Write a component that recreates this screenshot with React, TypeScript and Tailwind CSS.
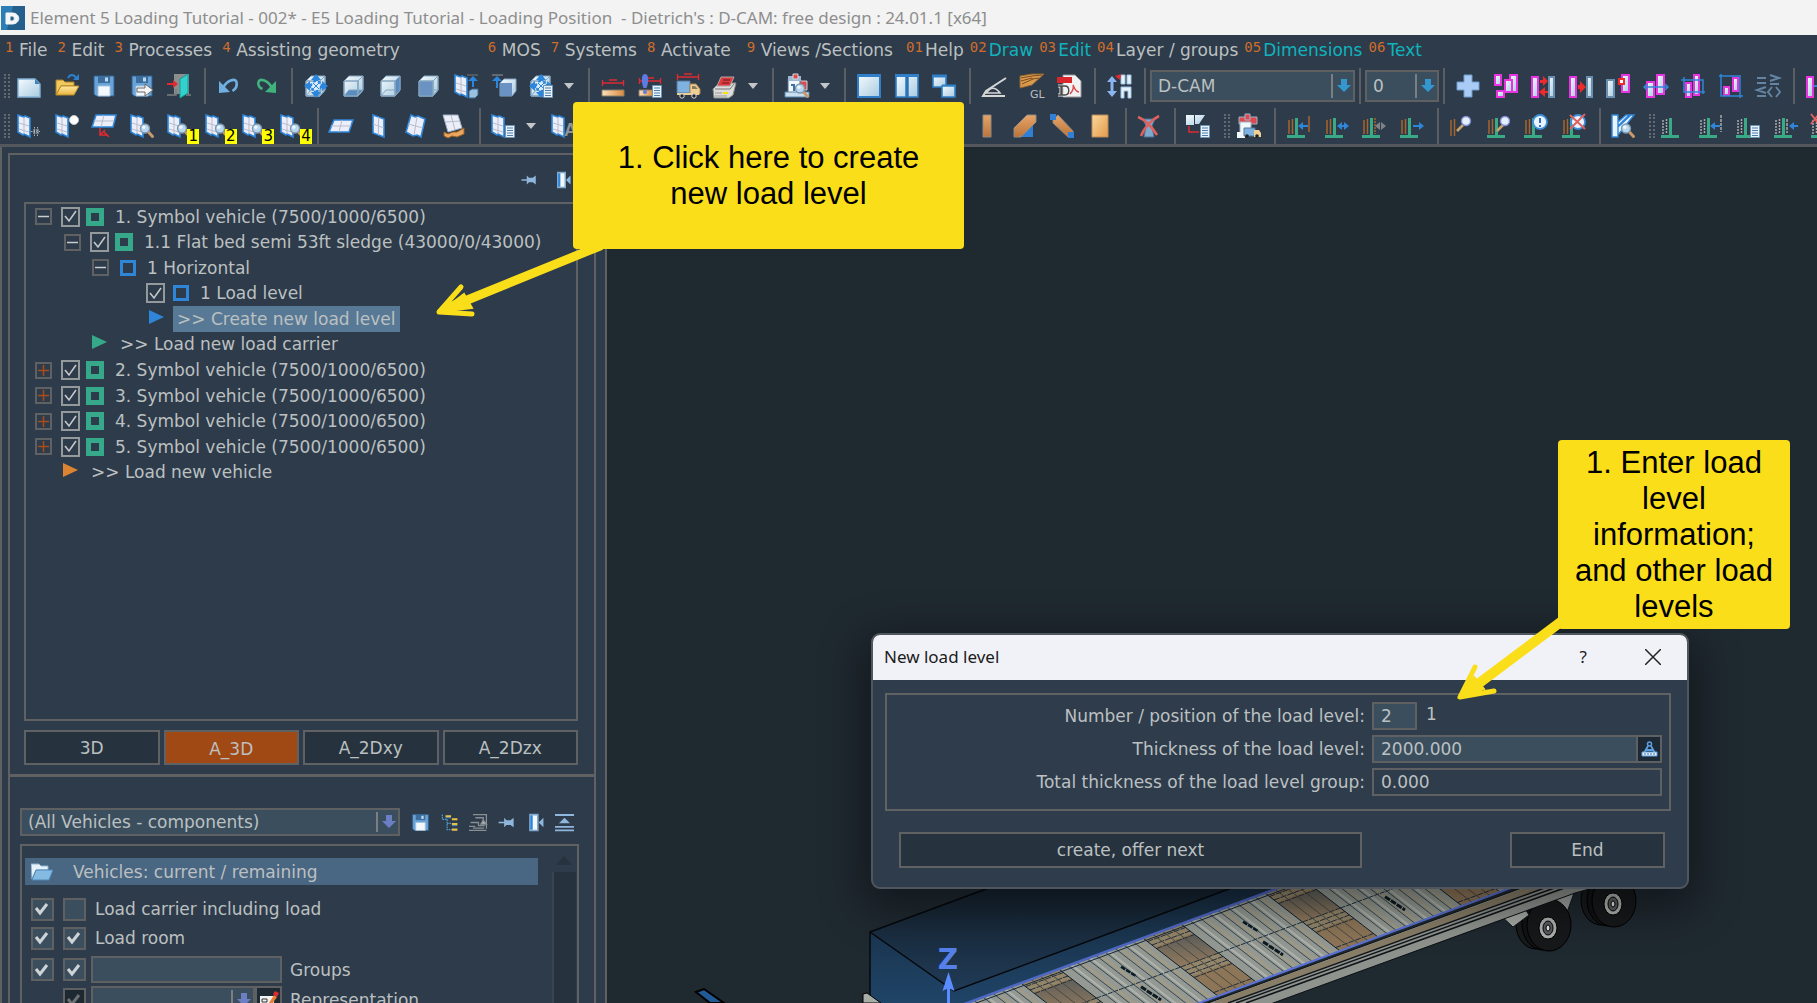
import React, { ReactNode } from "react";

/* ---------- drawing primitives for the toolbar icons (24 x 24) ---------- */

const Defs = () => (
  <svg width="0" height="0" className="absolute" aria-hidden="true">
    <defs>
      <linearGradient id="ice" x1="0" y1="0" x2="1" y2="1">
        <stop offset="0" stopColor="#f4fafe" />
        <stop offset="1" stopColor="#a9cbe0" />
      </linearGradient>
      <linearGradient id="wood" x1="0" y1="0" x2="1" y2="0">
        <stop offset="0" stopColor="#fbe0bd" />
        <stop offset="1" stopColor="#dc8a3c" />
      </linearGradient>
      <linearGradient id="beam" x1="0" y1="0" x2="0" y2="1">
        <stop offset="0" stopColor="#e8a568" />
        <stop offset="1" stopColor="#b8743a" />
      </linearGradient>
      <linearGradient id="plank" x1="0" y1="0" x2="1" y2="1">
        <stop offset="0" stopColor="#fbd79b" />
        <stop offset="1" stopColor="#e39a4c" />
      </linearGradient>
      <linearGradient id="gold" x1="0" y1="0" x2="0" y2="1">
        <stop offset="0" stopColor="#ffe9a0" />
        <stop offset="1" stopColor="#e9b440" />
      </linearGradient>
      <linearGradient id="hold" x1="0" y1="0" x2="0" y2="1">
        <stop offset="0" stopColor="#15222d" />
        <stop offset="1" stopColor="#203a56" />
      </linearGradient>
      <linearGradient id="side" x1="0" y1="0" x2="0" y2="1">
        <stop offset="0" stopColor="#182c40" />
        <stop offset="1" stopColor="#1f4467" />
      </linearGradient>
      <linearGradient id="crate" x1="0" y1="0" x2="0" y2="1">
        <stop offset="0" stopColor="#5f5f5c" />
        <stop offset="1" stopColor="#927a5c" />
      </linearGradient>
    </defs>
  </svg>
);

const Svg = ({ children, size = 24 }: { children: ReactNode; size?: number }) => (
  <svg width={size} height={size} viewBox="0 0 24 24" fill="none" className="block shrink-0 overflow-visible" aria-hidden="true">
    {children}
  </svg>
);

const Pane = () => (
  <g>
    <path d="M1 1l6 2 1 -1 5 2v19l-6-3-1 1-5-3z" fill="#eceefa" stroke="#2f86d8" strokeWidth="1.6" />
    <path d="M7 3v17M2 9l10 3M2 15l10 3" stroke="#b9bcc9" />
  </g>
);

const Mag = () => (
  <g>
    <path d="M17.500 17l5 5.500" stroke="#c99a6c" strokeWidth="3" strokeLinecap="round" />
    <circle cx="15" cy="14.500" r="4.500" fill="#b9d8f0" stroke="#7f98ae" strokeWidth="1.400" />
    <circle cx="13.800" cy="13.200" r="1.800" fill="#e9f5ff" />
  </g>
);

const List = () => (
  <g>
    <path d="M14.500 11.500h9v12h-9z" fill="#e9f2fa" stroke="#6d93b5" />
    <path d="M16 14h6M16 16.500h6M16 19h6M16 21.500h6" stroke="#4f7fa8" strokeWidth="1.200" />
  </g>
);

const Cube = ({ front = "none", right = "none", bottom = "none" }: { front?: string; right?: string; bottom?: string }) => (
  <g strokeWidth="1" stroke="#86a6c0">
    <path d="M2 7l5-5h14v14l-5 6H2z" fill="url(#ice)" />
    <path d="M2 22l5-6h14l-5 6z" fill={bottom} />
    <path d="M16 7l5-5v14l-5 6z" fill={right} />
    <path d="M2 7h14v15H2z" fill={front} />
    <path d="M2 7h14l5-5M16 7v15" />
  </g>
);

const CubeView = () => (
  <g>
    <Cube />
    <path d="M12 2v6M12 16v6M2 12h6M16 12h6" stroke="#2b86dd" strokeWidth="4" />
    <path d="M12 0l5 6H7zM12 24l5-6H7zM0 12l6-5v10zM24 12l-6-5v10z" fill="#2b86dd" />
    <circle cx="12" cy="12" r="5" stroke="#2b86dd" strokeWidth="2" strokeDasharray="3 2" fill="#dcecfa" />
    <path d="M9 9l6 6M15 9l-6 6" stroke="#2b86dd" />
  </g>
);

const Floppy = () => (
  <g>
    <path d="M2 2h20v20H4l-2-2z" fill="#6aa3d8" stroke="#2c608f" />
    <path d="M6 2h12v7H6z" fill="#3c6d9d" />
    <path d="M13 3.500h3v4h-3z" fill="#bcd6ee" />
    <path d="M6 12h12v10H6z" fill="#f3f8fc" stroke="#a8c4dc" />
  </g>
);

const Dim = ({ y }: { y: number }) => (
  <path d={`M1 ${y}h22M1.500 ${y - 3}v6M22.500 ${y - 3}v6M8 ${y - 3}h8`} stroke="#dd2b33" strokeWidth="1.400" />
);

const Bar = ({ x, y, w = 6, h, sel = true }: { x: number; y: number; w?: number; h: number; sel?: boolean }) => (
  <rect x={x} y={y} width={w} height={h} fill="url(#ice)" stroke={sel ? "#e733e0" : "#6a8fae"} strokeWidth="2" />
);

const Rail = ({ gray = false }: { gray?: boolean }) => (
  <g>
    <path d="M2 6v14M5.500 5v15" stroke={gray ? "#a9a9a9" : "#a8642c"} strokeWidth="1.500" strokeDasharray={gray ? "2 1" : undefined} />
    <path d="M9.500 4v17" stroke="#3aa986" strokeWidth="3" />
    <path d="M0 22.500h18" stroke="#3aa986" strokeWidth="3" />
  </g>
);

const Pin = () => (
  <g stroke="#8fb6dc" fill="#8fb6dc">
    <path d="M2 12h8" strokeWidth="2" />
    <path d="M9 6v12l3-3h5l4 3V6l-4 3h-5z" stroke="none" />
  </g>
);

const Dock = () => (
  <g>
    <path d="M5 2h10v20H5z" fill="#f3f8fc" stroke="#7fa9cf" strokeWidth="2" />
    <path d="M7 3v18" stroke="#2b86dd" strokeWidth="3" />
    <path d="M22 6v12l-6-6z" fill="#8fb6dc" />
  </g>
);

const icons: Record<string, ReactNode> = {
  blank: (
    <g>
      <path d="M1 5h17l5 5v13H1z" fill="url(#ice)" stroke="#84b3d6" strokeWidth="1.400" />
      <path d="M18 5v5h5z" fill="#3f82b8" />
    </g>
  ),
  open: (
    <g>
      <path d="M1 6h7l2 2h9v4H6L1 21z" fill="#f0c85e" stroke="#a97e22" />
      <path d="M6 12h18l-5 9H1z" fill="url(#gold)" stroke="#b98a27" />
      <path d="M13 4c2-4 6-4 8 0" stroke="#2e7fcc" strokeWidth="1.800" />
      <path d="M24 0v6h-6z" fill="#2e7fcc" />
    </g>
  ),
  save: <Floppy />,
  saveAs: (
    <g>
      <Floppy />
      <path d="M7 14h8v-4l8 6-8 6v-4H7z" fill="#f5f5f5" stroke="#666" />
    </g>
  ),
  exit: (
    <g>
      <path d="M7 0h15v20H7z" fill="#8d8d8d" />
      <path d="M0 21h9v-6M19 21h5" stroke="#7d7d7d" strokeWidth="1.500" />
      <path d="M13 5l8-5v19l-8 5z" fill="#34d0cc" stroke="#109c9b" />
      <path d="M0 10h9" stroke="#e02a30" strokeWidth="2" />
      <path d="M6 6l5 4-5 4z" fill="#e02a30" />
    </g>
  ),
  undo: (
    <g>
      <path d="M6 14C10 6 18 4 19.500 8c1 4-1 7-4 9" stroke="#6fb0e0" strokeWidth="2.600" />
      <path d="M2 7v12l11-1z" fill="#6fb0e0" />
    </g>
  ),
  redo: (
    <g>
      <path d="M18 14C14 6 6 4 4.500 8c-1 3 1 6 4 7" stroke="#40b37c" strokeWidth="2.600" />
      <path d="M22 7v12l-11-1z" fill="#40b37c" />
    </g>
  ),
  cubeView: <CubeView />,
  cubeBottom: <Cube bottom="#5a8cc0" />,
  cubeRight: <Cube right="#5a8cc0" />,
  cubeFront: <Cube front="#6a93c4" />,
  paneUp: (
    <g>
      <Pane />
      <path d="M13 1h11" stroke="#777" />
      <path d="M19 4v9" stroke="#2b86dd" strokeWidth="2" />
      <path d="M14 7l5-5 5 5z" fill="#2b86dd" />
      <path d="M15 17l3-2h6v6l-3 3h-6z" fill="#9cc0df" stroke="#3a6c98" />
    </g>
  ),
  cubeUp: (
    <g>
      <path d="M0 1h11" stroke="#999" />
      <path d="M5 4v10" stroke="#2b86dd" strokeWidth="2" />
      <path d="M0 7l5-5 5 5z" fill="#2b86dd" />
      <path d="M8 9l4-4h12v12l-4 5H8z" fill="url(#ice)" stroke="#86a6c0" />
      <path d="M8 9h12v13H8z" fill="#6a93c4" />
    </g>
  ),
  cubeList: (
    <g>
      <CubeView />
      <List />
    </g>
  ),
  measure: (
    <g>
      <Dim y={9} />
      <path d="M1 16h22v6H1z" fill="url(#wood)" stroke="#8a7b6c" />
    </g>
  ),
  measureList: (
    <g>
      <Dim y={7} />
      <path d="M1 16h14v6H1z" fill="url(#wood)" stroke="#8a7b6c" />
      <path d="M7 0c4 0 4 8 1.500 14h-3C3 8 3 0 7 0z" fill="#5f7ae0" />
      <circle cx="7" cy="18" r="2" fill="#5f7ae0" />
      <List />
    </g>
  ),
  truckDim: (
    <g>
      <Dim y={3} />
      <path d="M1 7h13v12H1z" fill="#7fb2de" stroke="#53799b" />
      <path d="M14 10h6l4 5v5H14z" fill="#f0cf94" stroke="#a5895a" />
      <path d="M16 12h3l3 3h-6z" fill="#8a7a5c" />
      <path d="M1 19h22v2H1z" fill="#f0cf94" />
      <circle cx="6" cy="22" r="2.200" fill="#222" stroke="#ddd" />
      <circle cx="18" cy="22" r="2.200" fill="#222" stroke="#ddd" />
    </g>
  ),
  printer: (
    <g>
      <path d="M0 15l6-6h17l-3 12-4 3H1z" fill="#dcdcdc" stroke="#888" />
      <path d="M8 3h13l-4 9H4z" fill="#e23a3e" stroke="#aaa" />
      <path d="M10 6h7M9 9h7" stroke="#5c1c1e" />
      <path d="M2 15h15l4-5" stroke="#777" />
      <path d="M10 18h5v2h-5z" fill="#f6e400" />
      <path d="M2 19h7M2 22h12" stroke="#999" />
    </g>
  ),
  report: (
    <g>
      <path d="M14 7h8v9h-8z" fill="#e0484d" stroke="#c9d6e2" />
      <path d="M3 5h12v14H3z" fill="#f2f7fb" stroke="#4a6f92" />
      <path d="M3 2h13v5H3z" fill="#9db9d1" />
      <path d="M8 0h5v5H8z" fill="#e0484d" stroke="#cfdbe6" />
      <path d="M6 11h3v6M11 12h3" stroke="#3d6fa0" strokeWidth="2" />
      <path d="M0 18h24v5H0z" fill="#c9dff0" stroke="#5b86ab" />
      <Mag />
    </g>
  ),
  win1: (
    <g>
      <path d="M1 1h22v22H1z" fill="url(#ice)" stroke="#2f80c9" strokeWidth="2" />
      <path d="M0 1.500h24" stroke="#2f80c9" strokeWidth="3" />
    </g>
  ),
  win2: (
    <g>
      <path d="M1 1h10v22H1zM13 1h10v22H13z" fill="url(#ice)" stroke="#2f80c9" strokeWidth="1.600" />
      <path d="M0 1.500h24" stroke="#2f80c9" strokeWidth="3" />
    </g>
  ),
  win3: (
    <g>
      <path d="M1 2h13v11H1z" fill="url(#ice)" stroke="#2f80c9" strokeWidth="1.600" />
      <path d="M0 2h15M10 12h14" stroke="#2f80c9" strokeWidth="3" />
      <path d="M10 12h13v11H10z" fill="url(#ice)" stroke="#2f80c9" strokeWidth="1.600" />
    </g>
  ),
  angle: (
    <g>
      <path d="M24 4L4 17l-3 5h22" stroke="#d6d6d6" strokeWidth="2" />
      <path d="M8 15c4-2 7 0 10 4H4z" stroke="#d6d6d6" strokeWidth="1.600" />
    </g>
  ),
  gl: (
    <g>
      <path d="M0 2l12-2h12L12 11 0 14z" fill="#d99a4e" stroke="#8d6331" />
      <path d="M1 4l11-2M1 7l11-3M2 10l11-5M12 2l10-1M12 5l7-1" stroke="#7d4e1e" />
      <text x="10" y="24" fontSize="11" fill="#bdbdbd" fontFamily="DejaVu Sans, sans-serif">GL</text>
    </g>
  ),
  pdf: (
    <g>
      <path d="M6 1h12l6 6v16H6z" fill="#f2f2f2" stroke="#999" />
      <path d="M0 3h15v6H0z" fill="#d9252b" />
      <path d="M1 12h3v9H1M5 12h3c5 0 5 9 0 9H5z" stroke="#f2f2f2" strokeWidth="3" />
      <path d="M1 12h3v9H1M5 12h3c5 0 5 9 0 9H5z" stroke="#4a4a4a" strokeWidth="1.400" />
      <path d="M13 20c3-3 4-7 3-9 2 5 4 7 6 7" stroke="#e0484d" strokeWidth="1.500" />
    </g>
  ),
  height: (
    <g>
      <path d="M5 4v16" stroke="#8cb5f0" strokeWidth="3" />
      <path d="M0 8l5-6 5 6zM0 17l5 6 5-6z" fill="#8cb5f0" />
      <path d="M14 1h4v9h-4zM20 1h4v9h-4zM14 13h10v11h-3v-7h-4v7h-3z" fill="#e8f2fb" stroke="#9cc4e3" />
      <path d="M8 2l6-2-1 6z" fill="#e02a30" />
    </g>
  ),
  plus: <path d="M8 1h8v7h7v8h-7v7H8v-7H1V8h7z" fill="#a9cbf5" stroke="#6f9ccd" />,
  sel1: (
    <g>
      <Bar x={1} y={1} h={10} />
      <Bar x={16} y={1} w={7} h={17} />
      <Bar x={11} y={6} w={7} h={12} />
      <Bar x={3} y={17} w={7} h={6} />
    </g>
  ),
  sel2: (
    <g>
      <Bar x={1} y={3} h={20} />
      <Bar x={18} y={3} w={5} h={20} sel={false} />
      <path d="M9 6h3V2l5 5-5 5V9H9zM17 17h-3v-4l-6 5 6 5v-4h3z" fill="#ee2a2a" />
    </g>
  ),
  sel3: (
    <g>
      <Bar x={1} y={3} h={20} />
      <Bar x={18} y={3} w={5} h={20} sel={false} />
      <path d="M9 11h2V7l6 6-6 6v-4H9z" fill="#ee2a2a" />
    </g>
  ),
  sel4: (
    <g>
      <Bar x={1} y={6} w={7} h={17} sel={false} />
      <Bar x={16} y={1} w={7} h={17} />
      <path d="M13 5h5v5h-5z" fill="#fff" stroke="#ee2a2a" strokeWidth="2" />
    </g>
  ),
  sel5: (
    <g>
      <Bar x={3} y={8} w={7} h={15} />
      <Bar x={13} y={1} w={7} h={19} />
      <path d="M0 13h24M3 10l-3 3 3 3M21 10l3 3-3 3" stroke="#2f86d8" strokeWidth="1.500" />
    </g>
  ),
  sel6: (
    <g>
      <Bar x={5} y={9} w={5} h={14} />
      <Bar x={13} y={1} w={5} h={20} />
      <path d="M0 6h22v14M3 3v15h21" stroke="#2f86d8" strokeWidth="1.500" />
    </g>
  ),
  sel7: (
    <g>
      <Bar x={5} y={13} w={5} h={8} />
      <Bar x={14} y={4} w={5} h={13} />
      <path d="M0 2h21v22M2 0v22h22" stroke="#2f86d8" strokeWidth="1.500" />
    </g>
  ),
  compare: (
    <path
      d="M1 4h9M1 9h9M14 1l9 3-9 3M14 10h9M10 13l-9 3 9 3M1 22h9M16 13l-4 5 4 5M20 13l4 5-4 5"
      stroke="#6385a3"
      strokeWidth="2"
    />
  ),
  sel8: (
    <g>
      <Bar x={1} y={3} h={20} />
      <path d="M8 12h16" stroke="#2f86d8" strokeWidth="2" />
    </g>
  ),
  paneMove: (
    <g>
      <Pane />
      <path d="M16 16h6M16 19h6M17.500 13v9M20.500 13v9M14 17.500h10" stroke="#aab2b8" strokeDasharray="1.500 1" />
    </g>
  ),
  paneLight: (
    <g>
      <Pane />
      <circle cx="19" cy="6" r="4.500" fill="#fff" stroke="#c9c9c9" />
    </g>
  ),
  paneAxis: (
    <g>
      <path d="M4 1h20l-3 12H0z" fill="#eceefa" stroke="#2f86d8" strokeWidth="1.600" />
      <path d="M2 7h20M12 1l-3 12" stroke="#b9bcc9" />
      <path d="M8 14v7h8M8 21l5-5M12 18l5 5" stroke="#e02a30" strokeWidth="1.600" />
    </g>
  ),
  paneMag: (
    <g>
      <Pane />
      <Mag />
    </g>
  ),
  paneFlat: (
    <g>
      <path d="M5 6h19l-4 12H0z" fill="#eceefa" stroke="#2f86d8" strokeWidth="1.600" />
      <path d="M2 12h20M13 6l-3 12" stroke="#b9bcc9" />
    </g>
  ),
  paneTall: (
    <g>
      <path d="M6 1l11 4v18L6 19z" fill="#eceefa" stroke="#2f86d8" strokeWidth="1.600" />
      <path d="M11.500 3v18M6 10l11 4" stroke="#b9bcc9" />
    </g>
  ),
  paneTilt: (
    <g>
      <path d="M7 1l4 2 3-1 7 3-4 18-4-2-4 1-7-4z" fill="#eceefa" stroke="#2f86d8" strokeWidth="1.600" />
      <path d="M13 3l-3 18M4 10l15 4" stroke="#b9bcc9" />
    </g>
  ),
  paneBeam: (
    <g>
      <path d="M1 1h15l4 13-14 4z" fill="#eceefa" stroke="#9fb0c0" />
      <path d="M9 1l4 15M3 8l15-1" stroke="#b9bcc9" />
      <path d="M2 18l4 2 5-2 4 0 7-4v6l-7 3-5-1-4 2-4-2z" fill="#eba75f" stroke="#9b6226" />
    </g>
  ),
  paneList: (
    <g>
      <Pane />
      <List />
    </g>
  ),
  paneText: (
    <g>
      <Pane />
      <text x="13" y="22" fontSize="18" fontWeight="700" fill="#8f9499" fontFamily="Liberation Sans, sans-serif">A</text>
    </g>
  ),
  beam1: <path d="M8 1h8v22H8z" fill="url(#beam)" stroke="#8f8a84" />,
  beam2: (
    <g>
      <path d="M5 23L20 8v15z" fill="#2f7fd6" />
      <path d="M1 14L14 1h9v7L8 23H1z" fill="url(#beam)" stroke="#8f8a84" />
    </g>
  ),
  beam3: (
    <g>
      <path d="M3 5l5-4 15 16v6h-5L3 9z" fill="url(#beam)" stroke="#8f8a84" />
      <path d="M0 0h6v6H0zM18 18h6v6h-6z" fill="#2f7fd6" />
    </g>
  ),
  beam4: <path d="M4 1h16v22H4z" fill="url(#plank)" stroke="#b98a58" />,
  cut: (
    <g>
      <path d="M6 5h12l-3 7 2 11H7l2-11z" fill="#7fa9cc" stroke="#4b7196" />
      <path d="M1 3c8 3 14 10 19 18M22 2C14 6 7 14 4 22" stroke="#e0605e" strokeWidth="2.600" />
    </g>
  ),
  flow: (
    <g>
      <path d="M0 1h8v10H0zM9 1h10l-6 9H9z" fill="url(#ice)" />
      <path d="M3 12v6h10" stroke="#e02a30" strokeWidth="1.500" />
      <List />
    </g>
  ),
  calc: (
    <g>
      <path d="M2 3h18v7H2z" fill="#e0484d" stroke="#9db5ca" />
      <path d="M8 0h5v6H8z" fill="#e0484d" stroke="#9db5ca" />
      <path d="M3 8h11v13H3z" fill="#f2f7fb" stroke="#9db5ca" />
      <path d="M0 18h8v6H0z" fill="#f2f7fb" />
      <path d="M7 14h11v8H7z" fill="#7fb2de" stroke="#53799b" />
      <path d="M17 16h5l2 3v4h-7z" fill="#f0cf94" />
      <circle cx="10" cy="22" r="1.800" fill="#222" />
      <circle cx="20" cy="22" r="1.800" fill="#222" />
    </g>
  ),
  rail1: (
    <g>
      <Rail />
      <path d="M22 2v16" stroke="#a8642c" strokeWidth="1.500" />
      <path d="M13 12h8" stroke="#2f86d8" strokeWidth="2" />
      <path d="M11 12l5-4v8z" fill="#2f86d8" />
    </g>
  ),
  rail2: (
    <g>
      <Rail />
      <path d="M12 12l5-4v8zM24 12l-5-4v8z" fill="#2f86d8" />
      <path d="M15 12h6" stroke="#2f86d8" strokeWidth="2" />
    </g>
  ),
  rail3: (
    <g>
      <Rail />
      <path d="M13 4v16" stroke="#a8642c" strokeDasharray="2 1" strokeWidth="1.500" />
      <path d="M13 12l5-4v8zM24 12l-5-4v8z" fill="#7f8386" />
    </g>
  ),
  rail4: (
    <g>
      <Rail />
      <path d="M13 12h8" stroke="#2f86d8" strokeWidth="2" />
      <path d="M24 12l-5-4v8z" fill="#2f86d8" />
    </g>
  ),
  find1: (
    <g>
      <path d="M2 6v16M5.500 5v17" stroke="#a8642c" strokeWidth="1.500" />
      <path d="M8 17l6-6" stroke="#c9a36c" strokeWidth="2.600" />
      <circle cx="17" cy="7" r="4.500" fill="#e6efff" stroke="#7f8fd0" strokeWidth="1.400" />
    </g>
  ),
  find2: (
    <g>
      <Rail />
      <path d="M10 17l6-6" stroke="#c9a36c" strokeWidth="2.600" />
      <circle cx="18" cy="7" r="4.500" fill="#e6efff" stroke="#7f8fd0" strokeWidth="1.400" />
    </g>
  ),
  warn: (
    <g>
      <Rail />
      <circle cx="16" cy="8" r="7" fill="#eaf4ff" stroke="#3f8fd8" strokeWidth="1.800" />
      <path d="M16 4v5M16 11v2" stroke="#2f6fc0" strokeWidth="2" />
    </g>
  ),
  warnOff: (
    <g>
      <Rail />
      <circle cx="16" cy="8" r="7" fill="#eaf4ff" stroke="#3f8fd8" strokeWidth="1.800" />
      <path d="M8 1l15 14M23 0L8 15" stroke="#e0605e" strokeWidth="2" />
    </g>
  ),
  sheet: (
    <g>
      <path d="M1 1h6v22H1zM7 13L20 1h3L7 21zM7 8l8-7h3L7 12z" fill="#eaf4ff" stroke="#2f86d8" strokeWidth="1.400" />
      <Mag />
    </g>
  ),
  grail1: <Rail gray />,
  grail2: (
    <g>
      <Rail gray />
      <path d="M22 1v17" stroke="#a9a9a9" strokeDasharray="3 1" strokeWidth="1.500" />
      <path d="M13 12h8" stroke="#2f86d8" strokeWidth="2" />
      <path d="M11 12l5-4v8z" fill="#2f86d8" />
    </g>
  ),
  grail3: (
    <g>
      <Rail gray />
      <List />
    </g>
  ),
  grail4: (
    <g>
      <Rail gray />
      <path d="M13 5v14" stroke="#a9a9a9" strokeDasharray="3 1" strokeWidth="1.500" />
      <path d="M17 12h7" stroke="#2f86d8" strokeWidth="2" />
      <path d="M15 12l5-4v8z" fill="#2f86d8" />
    </g>
  ),
  grail5: (
    <g>
      <Rail gray />
      <path d="M0 0l8 10M8 0L0 10" stroke="#e0605e" strokeWidth="2" />
    </g>
  ),
  tree: (
    <g>
      <path d="M3 2v6h6M9 8v13h6M9 13h6" stroke="#4f9fc9" strokeWidth="1.500" strokeDasharray="2 1" />
      <path d="M7 4h7M15 8h7M15 14h7M15 21h7" stroke="#e8c14a" strokeWidth="2.600" />
      <path d="M7 6h7M15 16h7" stroke="#5fa8d0" />
    </g>
  ),
  history: (
    <g stroke="#8a8f94" strokeWidth="1.600">
      <path d="M5 2h17v18M8 6h10v8M2 12h10v4h8M0 17h8M0 22h22M5 19h14" />
      <path d="M15 14l3-5 4 5z" fill="#b8bcc0" />
    </g>
  ),
  pin: <Pin />,
  dock: <Dock />,
  collapse: (
    <g stroke="#8fb6dc">
      <path d="M0 2.500h24M0 17.500h24M0 22h24" strokeWidth="2.400" />
      <path d="M12 6l7 7H5z" fill="#8fb6dc" stroke="none" />
    </g>
  ),
};

/* ---------- toolbar parts ---------- */

const ToolButton = ({ name, badge }: { name: string; badge?: string }) => (
  <button type="button" aria-label={badge ? `${name} ${badge}` : name} className="relative block size-6 shrink-0">
    <Svg>{icons[name]}</Svg>
    {badge && (
      <span className="absolute -right-2 -bottom-1.5 h-[15px] w-3 bg-[#ffff00] text-center text-[15px] leading-[15px] text-black">
        {badge}
      </span>
    )}
  </button>
);

const Group = ({ names, className = "", badges = {} }: { names: string[]; className?: string; badges?: Record<number, string> }) => (
  <div className={`flex shrink-0 items-center justify-between ${className}`}>
    {names.map((n, i) => (
      <ToolButton key={i} name={n} badge={badges[i]} />
    ))}
  </div>
);

const Sep = ({ className = "ml-[13px] mr-[11px]" }: { className?: string }) => (
  <span className={`h-9 w-0.5 shrink-0 bg-[#5b5f64] ${className}`} />
);

const Grip = ({ className = "" }: { className?: string }) => (
  <span className={`flex h-6 shrink-0 gap-0.5 ${className}`}>
    <span className="border-l-2 border-dotted border-[#626970]" />
    <span className="border-l-2 border-dotted border-[#626970]" />
  </span>
);

const More = () => (
  <button type="button" aria-label="More" className="ml-[11px] mr-px w-2.5 shrink-0">
    <svg width="10" height="6" viewBox="0 0 10 6" className="block">
      <path d="M0 0h10L5 6z" fill="#c3c7ca" />
    </svg>
  </button>
);

const DownArrow = ({ color }: { color: string }) => (
  <svg width="14" height="14" viewBox="0 0 14 14" className="block">
    <path d="M4 0h6v6h4l-7 7-7-7h4z" fill={color} />
  </svg>
);

const Combo = ({ label, value, className, color = "#3497cf" }: { label: string; value: string; className: string; color?: string }) => (
  <div className={`relative flex shrink-0 items-center ${className}`}>
    <select
      aria-label={label}
      className="h-full w-full appearance-none border-2 border-[#5f6062] bg-[#3a4e5e] pl-1.5 text-[17px] text-[#bcc0c1] outline-none"
    >
      <option>{value}</option>
    </select>
    <span className="pointer-events-none absolute inset-y-1 right-1 flex items-center gap-1 border-l-2 border-[#7c7f82] pl-1">
      <DownArrow color={color} />
    </span>
  </div>
);

const menuLeft: [string, string][] = [["1", "File"], ["2", "Edit"], ["3", "Processes"], ["4", "Assisting geometry"]];
const menuMid: [string, string][] = [["6", "MOS"], ["7", "Systems"], ["8", "Activate"]];
const menuRight: [string, string, boolean][] = [
  ["01", "Help", false],
  ["02", "Draw", true],
  ["03", "Edit", true],
  ["04", "Layer / groups", false],
  ["05", "Dimensions", true],
  ["06", "Text", true],
];

const MenuItem = ({ num, text, accent = false }: { num: string; text: string; accent?: boolean }) => (
  <button type="button" className="flex shrink-0 items-start whitespace-nowrap">
    <span className={`font-[DejaVu_Sans_Mono,monospace] text-[14px] leading-[18px] text-[#d06d2c] text-left ${num.length > 1 ? "w-[19px]" : "w-3.5"}`}>
      {num}
    </span>
    <span className={accent ? "text-[#10b3bd]" : "text-[#bcc0c1]"}>{text}</span>
  </button>
);

/* ---------- vehicle tree ---------- */

const Expander = ({ open }: { open: boolean }) => (
  <button
    type="button"
    aria-label={open ? "Collapse" : "Expand"}
    className="flex size-[17px] shrink-0 items-center justify-center border-2 border-[#5f6163]"
  >
    <svg width="11" height="11" viewBox="0 0 11 11" className="block shrink-0">
      {open ? <path d="M0 5.500h11" stroke="#c9cdd0" strokeWidth="1.500" /> : <path d="M0 5.500h11M5.500 0v11" stroke="#a84c1c" strokeWidth="1.500" />}
    </svg>
  </button>
);

const TreeCheck = ({ label }: { label: string }) => (
  <span className="grid h-5 w-[19px] shrink-0 place-items-center">
    <input type="checkbox" defaultChecked aria-label={label} className="col-start-1 row-start-1 h-full w-full appearance-none border-2 border-[#94999c]" />
    <svg width="13" height="13" viewBox="0 0 13 13" fill="none" className="pointer-events-none col-start-1 row-start-1">
      <path d="M1 6l4 5 7-10" stroke="#c3c7c9" strokeWidth="1.600" />
    </svg>
  </span>
);

const Square = ({ blue = false }: { blue?: boolean }) => (
  <span className={blue ? "size-4 shrink-0 border-[3px] border-[#2f86d8]" : "size-[18px] shrink-0 border-[5px] border-[#36a98a]"} />
);

const Play = ({ color }: { color: string }) => (
  <svg width="15" height="14" viewBox="0 0 15 14" className="mb-1 block shrink-0">
    <path d="M0 0l15 7-15 7z" fill={color} />
  </svg>
);

const VehicleRow = ({ text, open = false, className = "pl-[9px]" }: { text: string; open?: boolean; className?: string }) => (
  <li className={`flex items-center ${className}`}>
    <Expander open={open} />
    <span className="ml-[9px] flex items-center gap-1.5">
      <TreeCheck label={text} />
      <Square />
    </span>
    <span className="ml-[11px] whitespace-nowrap">{text}</span>
  </li>
);

const TreePanel = () => (
  <section className="border-2 border-b-[3px] border-[#5f6163] pl-3.5 pr-4 pb-[9px]">
    <div className="flex h-[47px] items-center justify-end gap-4 pr-1.5 pt-0.5">
      <button type="button" aria-label="Pin"><Svg size={18}>{icons.pin}</Svg></button>
      <button type="button" aria-label="Dock"><Svg size={18}>{icons.dock}</Svg></button>
    </div>
    <div className="h-[519px] border-2 border-[#5f6163]">
      <ul className="grid h-[281px] auto-rows-fr">
        <VehicleRow open text="1. Symbol vehicle (7500/1000/6500)" />
        <VehicleRow open text="1.1 Flat bed semi 53ft sledge (43000/0/43000)" className="pl-[38px]" />
        <li className="flex items-center pl-[66px]">
          <Expander open />
          <span className="ml-[11px] mr-[11px] flex"><Square blue /></span>
          1 Horizontal
        </li>
        <li className="flex items-center pl-[120px]">
          <TreeCheck label="1 Load level" />
          <span className="ml-2 mr-[11px] flex"><Square blue /></span>
          1 Load level
        </li>
        <li className="flex items-center gap-[9px] pl-[123px]">
          <Play color="#2f86d8" />
          <button type="button" className="flex self-stretch items-center bg-[#577995] pl-1 pr-1">&gt;&gt; Create new load level</button>
        </li>
        <li className="flex items-center gap-[13px] pl-[66px]">
          <Play color="#36a98a" />
          <button type="button">&gt;&gt; Load new load carrier</button>
        </li>
        <VehicleRow text="2. Symbol vehicle (7500/1000/6500)" />
        <VehicleRow text="3. Symbol vehicle (7500/1000/6500)" />
        <VehicleRow text="4. Symbol vehicle (7500/1000/6500)" />
        <VehicleRow text="5. Symbol vehicle (7500/1000/6500)" />
        <li className="flex items-center gap-[13px] pl-[37px]">
          <Play color="#dd8432" />
          <button type="button">&gt;&gt; Load new vehicle</button>
        </li>
      </ul>
    </div>
    <div className="mt-[9px] grid grid-cols-4 gap-1">
      {["3D", "A_3D", "A_2Dxy", "A_2Dzx"].map((t) => (
        <button
          key={t}
          type="button"
          className={`h-[35px] border-2 border-[#5f6163] ${t === "A_3D" ? "bg-[#a04914] pt-0.5" : "bg-[#26333e]"}`}
        >
          {t}
        </button>
      ))}
    </div>
  </section>
);

/* ---------- component filter ---------- */

const Tick = ({ label, checked = true, dim = false }: { label: string; checked?: boolean; dim?: boolean }) => (
  <span className="grid size-[23px] shrink-0 place-items-center">
    <input
      type="checkbox"
      aria-label={label}
      defaultChecked={checked}
      className={`col-start-1 row-start-1 size-full appearance-none border-2 border-[#5f6062] ${dim ? "bg-[#1e2830]" : "bg-[#3a4e5e]"}`}
    />
    {checked && (
      <svg width="16" height="14" viewBox="0 0 16 14" fill="none" className="pointer-events-none col-start-1 row-start-1">
        <path d="M1 6l4 5 7-9" stroke={dim ? "#6d7174" : "#cfd3d5"} strokeWidth="3" />
      </svg>
    )}
  </span>
);

const FilterPanel = () => (
  <section className="flex min-h-0 flex-1 flex-col border-x-2 border-[#5f6163] pt-[31px]">
    <div className="flex items-center pl-2.5">
      <Combo label="Component filter" value="(All Vehicles - components)" className="h-7 w-[380px]" color="#6d7fc4" />
      <div className="ml-[11px] flex w-[163px] items-center justify-between">
        {["save", "tree", "history", "pin", "dock", "collapse"].map((n) => (
          <button key={n} type="button" aria-label={n}><Svg size={19}>{icons[n]}</Svg></button>
        ))}
      </div>
    </div>
    <div className="ml-2.5 mt-2 mr-[15px] flex min-h-0 flex-1 overflow-hidden border-2 border-b-0 border-[#5f6163]">
      <div className="min-w-0 flex-1 pt-3 pl-[3px]">
        <h2 className="flex h-[27px] items-center gap-5 bg-[#496683] pl-1.5">
          <svg width="22" height="18" viewBox="0 0 22 18" className="block">
            <path d="M0 1h8l2 2h7v4H5L1 16z" fill="#e6f3fc" stroke="#8db5d3" />
            <path d="M5 7h17l-4 10H1z" fill="#85bbe2" stroke="#4d86b3" />
          </svg>
          Vehicles: current / remaining
        </h2>
        <div className="ml-1.5 flex flex-col">
          <div className="mt-3 flex items-center gap-[9px]">
            <Tick label="Load carrier, current" />
            <Tick label="Load carrier, remaining" checked={false} />
            <span>Load carrier including load</span>
          </div>
          <div className="mt-[5px] flex items-center gap-[9px]">
            <Tick label="Load room, current" />
            <Tick label="Load room, remaining" />
            <span>Load room</span>
          </div>
          <div className="mt-1.5 flex items-center gap-[9px]">
            <Tick label="Groups, current" />
            <Tick label="Groups, remaining" />
            <div className="-ml-1 flex items-center gap-2">
              <input id="groups" className="h-[27px] w-[191px] border-2 border-[#5f6062] bg-[#3a4e5e] px-1.5 outline-none" />
              <label htmlFor="groups">Groups</label>
            </div>
          </div>
          <div className="mt-[3px] flex items-center gap-[9px]">
            <span className="size-[23px] shrink-0" />
            <Tick label="Representation, remaining" dim />
            <div className="-ml-1 flex items-center">
              <Combo label="Representation" value="" className="h-[27px] w-[164px]" color="#6d7fc4" />
              <button type="button" aria-label="Edit representation" className="mr-2 flex h-[27px] w-[27px] items-center justify-center border-2 border-[#5f6062] bg-[#1e2a34]">
                <svg width="20" height="18" viewBox="0 0 20 18">
                  <path d="M1 5h14v12H1z" fill="#f2f2f2" />
                  <path d="M3 8h5v3H3zM3 13h9" stroke="#333" fill="none" />
                  <path d="M8 15l7-11 3 2-7 10z" fill="#ef7d33" />
                  <path d="M14 3l2-3 4 2-2 4z" fill="#e02a30" />
                </svg>
              </button>
              <span>Representation</span>
            </div>
          </div>
        </div>
      </div>
      <div className="ml-[14px] mr-px flex w-6 flex-col items-center">
        <svg width="16" height="9" viewBox="0 0 16 9" className="mt-2.5 mb-[7px]">
          <path d="M8 0l8 9H0z" fill="#26333e" />
        </svg>
        <span className="w-full flex-1 border-l-2 border-[#39444e] bg-[#26333e]" />
      </div>
    </div>
  </section>
);

/* ---------- 3D view of the trailer ---------- */

const at = (x: number, s: number) => `${(x + 75 * s).toFixed(1)},${(1003 - (x - 967) * 0.369 + 58 * s).toFixed(1)}`;
const quad = (x0: number, x1: number, s0: number, s1: number) => `M${at(x0, s0)}L${at(x1, s0)}L${at(x1, s1)}L${at(x0, s1)}Z`;
const line = (x0: number, s0: number, x1: number, s1: number) => `M${at(x0, s0)}L${at(x1, s1)}`;
const bays = [777, 899, 1021, 1143, 1265, 1387];

const Wheel = ({ x, y }: { x: number; y: number }) => (
  <g stroke="#000">
    <ellipse cx={x - 13} cy={y - 1} rx="20" ry="25" fill="#17191b" />
    <ellipse cx={x - 6} cy={y - 1} rx="21" ry="26" fill="#101214" />
    <ellipse cx={x} cy={y} rx="22" ry="26" fill="#17181a" />
    <ellipse cx={x - 1} cy={y + 3} rx="9" ry="11" fill="#aeb2ae" />
    <ellipse cx={x - 1} cy={y + 3} rx="5" ry="7" fill="#5a5e60" />
    <ellipse cx={x - 1} cy={y + 3} rx="2" ry="3" fill="#e8e8e8" />
  </g>
);

const Trailer = () => (
  <svg width="1210" height="856" viewBox="607 147 1210 856" className="absolute left-0 top-0" role="img" aria-label="Trailer with load room">
    <path d="M870 932L994 886H1283L967 1003H870Z" fill="url(#side)" />
    <path d="M870 932L994 886H1237L954 991Z" fill="url(#hold)" />
    <path d="M994 886L870 932V1003M870 932L954 991L1237 886" stroke="#05080b" strokeWidth="1.500" fill="none" />

    <path d="M1500 907l60-20 14 6-8 22-20 -4-26 16z" fill="#9da29f" stroke="#15191c" />
    <Wheel x={1614} y={901} />
    <Wheel x={1549} y={925} />
    <path d="M1497 912l24-9 8 12-16 12z" fill="#a5aaa6" stroke="#15191c" />

    <path d="M1208 1003L1527 886H1600L1575 893L1254 1010Z" fill="#8f938e" stroke="#0c1014" />
    <path d="M1215 1003L1535 886M1222 1003L1545 886" stroke="#887d66" strokeWidth="3" />
    <path d="M1236 1003L1560 886M1246 1003L1570 886M1228 1003L1550 886" stroke="#11161a" strokeWidth="1.500" />

    <path d={quad(860, 1500, 0, 1)} fill="#949a93" />
    {bays.map((b) => (
      <g key={b}>
        <path d={quad(b, b + 38, 0, 1)} fill="#8d7558" />
        <path d={quad(b, b + 38, 0.18, 0.5)} fill="url(#crate)" />
        <path d={quad(b, b + 38, 0, 0.16)} fill="#94866a" />
        <path d={quad(b, b + 38, 0.5, 0.66)} fill="#94866a" />
        {[0.06, 0.12, 0.18, 0.5, 0.56, 0.62, 0.68, 0.94].map((s) => (
          <path key={s} d={line(b, s, b + 38, s)} stroke="#22303a" strokeDasharray="6 1" />
        ))}
        {[0, 10, 19, 28, 38].map((d) => (
          <path key={d} d={line(b + d, 0, b + d, 1)} stroke={d % 38 ? "#4b4a42" : "#10202c"} />
        ))}
        {[47, 56, 66, 75, 84, 94, 103, 112].map((d, i) => (
          <g key={d}>
            <path d={line(b + d, 0, b + d, 1)} stroke="#39474f" />
            <path d={line(b + d + 3, 0, b + d + 3, 1)} stroke={i % 2 ? "#a39b84" : "#aeb3ad"} strokeWidth="2" />
          </g>
        ))}
        <path d={line(b + 38, 0.5, b + 122, 0.5)} stroke="#1e3140" strokeDasharray="5 1" />
        <path d={line(b + 82, 0.24, b + 84, 0.42)} stroke="#0c1a24" strokeWidth="2.500" strokeDasharray="5 1" />
        <path d={line(b + 78, 0.56, b + 80, 0.8)} stroke="#0c1a24" strokeWidth="3" strokeDasharray="6 1" />
      </g>
    ))}
    <path d={line(860, 0, 1500, 0)} stroke="#4f68c4" strokeWidth="2.500" />
    <path d={line(860, 1, 1500, 1)} stroke="#5b72d6" strokeWidth="2" />
    <path d={line(860, 0.04, 1500, 0.04)} stroke="#15283a" />

    <path d="M863 1003V994l4-1 14 10z" fill="#a9ada8" stroke="#000" />
    <path d="M696 992l8-3 20 14h-14z" fill="#215a94" stroke="#000" strokeWidth="2" />
    <path d="M948.500 1003V980" stroke="#5b8cff" strokeWidth="3" />
    <path d="M948.500 972l6 19-6-3-6 3z" fill="#5b8cff" />
    <text x="948" y="969" textAnchor="middle" fontSize="28" fontWeight="700" fill="#5580ea" fontFamily="DejaVu Sans, sans-serif">Z</text>
  </svg>
);

/* ---------- dialog ---------- */

const NewLevelDialog = () => (
  <div
    role="dialog"
    aria-label="New load level"
    className="absolute left-[264px] top-[486px] w-[818px] overflow-hidden rounded-[9px] border-2 border-[#50565d] bg-[#2e3c4b] shadow-[0_12px_44px_8px_rgba(0,0,0,0.4)]"
  >
    <div className="flex h-[45px] items-center bg-[#f1f2f8] pl-[11px] pr-[26px] pb-0.5 font-['Noto_Sans','Open_Sans',sans-serif] text-[17px] text-[#1b1b1b]">
      <span className="flex-1">New load level</span>
      <button type="button" aria-label="Help" className="mr-[58px]">?</button>
      <button type="button" aria-label="Close">
        <svg width="16" height="16" viewBox="0 0 16 16" className="block">
          <path d="M0 0l16 16M16 0L0 16" stroke="#222" strokeWidth="1.500" />
        </svg>
      </button>
    </div>
    <div className="pl-3 pr-4 pt-[13px] pb-[19px] text-[#bcc0c1]">
      <div className="grid grid-cols-[1fr_290px] items-center gap-x-[7px] gap-y-[5px] border-2 border-[#5f6163] pt-[7px] pr-[7px] pb-[13px]">
        <label htmlFor="num" className="text-right">Number / position of the load level:</label>
        <div className="flex gap-[9px]">
          <input id="num" defaultValue="2" className="h-7 w-[45px] border-2 border-[#5f6062] bg-[#3a4e5e] pl-[7px] outline-none" />
          <span>1</span>
        </div>
        <label htmlFor="thick" className="text-right">Thickness of the load level:</label>
        <div className="flex">
          <input id="thick" defaultValue="2000.000" className="h-7 min-w-0 flex-1 border-2 border-r-0 border-[#5f6062] bg-[#3a4e5e] pl-[7px] outline-none" />
          <button type="button" aria-label="Measure" className="flex h-7 w-[26px] items-center justify-center border-2 border-[#5f6062] bg-[#1d2a35]">
            <svg width="17" height="17" viewBox="0 0 17 17" fill="none">
              <circle cx="8.500" cy="3" r="2" stroke="#5f9fe0" strokeWidth="1.500" />
              <path d="M7 5l-4 7M10 5l4 7M5 9h7" stroke="#5f9fe0" strokeWidth="1.800" />
              <path d="M1 11h15v4H1z" fill="#e4f0fb" stroke="#5f9fe0" />
              <path d="M4 12v2M7 12v2M10 12v2M13 12v2" stroke="#3f6f9f" />
            </svg>
          </button>
        </div>
        <label htmlFor="total" className="text-right">Total thickness of the load level group:</label>
        <input id="total" readOnly defaultValue="0.000" className="h-7 w-full border-2 border-[#5f6062] bg-transparent pl-[7px] outline-none" />
      </div>
      <div className="mt-[21px] flex justify-between pl-3.5 pr-1.5">
        <button type="button" className="h-9 w-[463px] border-2 border-[#5f6163] bg-[#26333e]">create, offer next</button>
        <button type="button" className="h-9 w-[155px] border-2 border-[#5f6163] bg-[#26333e]">End</button>
      </div>
    </div>
  </div>
);

export default function App() {
  return (
    <div className="relative flex h-screen flex-col overflow-hidden bg-[#2d3b4a] font-['DejaVu_Sans',sans-serif] text-[17px] leading-6 text-[#bcc0c1]">
      <Defs />
      <header className="flex h-[35px] shrink-0 items-center gap-[5px] bg-[#f3f3f3] pl-px font-['Noto_Sans','Open_Sans',sans-serif] text-[17px] text-[#8e8e8e]">
        <svg width="24" height="24" viewBox="0 0 24 24" className="block shrink-0">
          <path d="M0 0h24v24H0z" fill="#2c7fb5" />
          <path d="M12 0h12v24H6z" fill="#255f8c" />
          <path d="M5 7h6c9 0 9 11 0 11H5zM9 10v5h2c3 0 3-5 0-5z" fill="#f4f6f8" fillRule="evenodd" stroke="#f4f6f8" />
        </svg>
        <h1 className="whitespace-pre">{"Element 5 Loading Tutorial - 002* - E5 Loading Tutorial - Loading Position  - Dietrich's : D-CAM: free design : 24.01.1 [x64]"}</h1>
      </header>

      <nav className="flex h-[30px] shrink-0 items-start pl-[5px] pt-[3px]">
        <div className="flex gap-2.5">{menuLeft.map(([n, t]) => <MenuItem key={n} num={n} text={t} />)}</div>
        <div className="ml-[88px] flex gap-2.5">{menuMid.map(([n, t]) => <MenuItem key={n} num={n} text={t} />)}</div>
        <div className="ml-4 mr-[13px] flex"><MenuItem num="9" text="Views /Sections" /></div>
        <div className="flex gap-1.5">{menuRight.map(([n, t, a]) => <MenuItem key={n} num={n} text={t} accent={a} />)}</div>
      </nav>

      <div className="flex h-[42px] shrink-0 items-center overflow-hidden pl-1">
        <Grip className="mr-[7px]" />
        <Group className="w-[174px]" names={["blank", "open", "save", "saveAs", "exit"]} />
        <Sep />
        <Group className="w-[61px]" names={["undo", "redo"]} />
        <Sep />
        <Group className="w-[249px]" names={["cubeView", "cubeBottom", "cubeRight", "cubeFront", "paneUp", "cubeUp", "cubeList"]} />
        <More />
        <Sep />
        <Group className="w-[136px]" names={["measure", "measureList", "truckDim", "printer"]} />
        <More />
        <Sep />
        <Group names={["report"]} />
        <More />
        <Sep />
        <Group className="w-[99px]" names={["win1", "win2", "win3"]} />
        <Sep />
        <Group className="w-[99px]" names={["angle", "gl", "pdf"]} />
        <Sep />
        <Group names={["height"]} />
        <Sep className="ml-[13px] mr-1" />
        <Combo label="Program" value="D-CAM" className="h-8 w-[205px]" />
        <Sep className="mx-1" />
        <Combo label="Level" value="0" className="h-8 w-[74px]" />
        <Sep className="ml-1 mr-[11px]" />
        <Group className="w-[324px]" names={["plus", "sel1", "sel2", "sel3", "sel4", "sel5", "sel6", "sel7", "compare"]} />
        <Sep />
        <Group names={["sel8"]} />
      </div>

      <div className="flex h-[37px] shrink-0 items-center overflow-x-clip pl-1">
        <Grip className="mr-[7px]" />
        <Group
          className="w-[287px]"
          names={["paneMove", "paneLight", "paneAxis", "paneMag", "paneMag", "paneMag", "paneMag", "paneMag"]}
          badges={{ 4: "1", 5: "2", 6: "3", 7: "4" }}
        />
        <Sep className="ml-[13px] mr-2.5" />
        <Group className="w-[137px]" names={["paneFlat", "paneTall", "paneTilt", "paneBeam"]} />
        <Sep className="ml-[13px] mr-2.5" />
        <Group names={["paneList"]} />
        <More />
        <Group className="ml-3.5 mr-[400px]" names={["paneText"]} />
        <Group className="w-[137px]" names={["beam1", "beam2", "beam3", "beam4"]} />
        <Sep className="ml-[13px] mr-2.5" />
        <Group names={["cut"]} />
        <Sep className="ml-[13px] mr-2.5" />
        <Group names={["flow"]} />
        <Grip className="ml-[14px] mr-[7px]" />
        <Group names={["calc"]} />
        <Sep />
        <Group className="w-[137px]" names={["rail1", "rail2", "rail3", "rail4"]} />
        <Sep className="ml-[13px] mr-2.5" />
        <Group className="w-[137px]" names={["find1", "find2", "warn", "warnOff"]} />
        <Sep className="ml-[13px] mr-2.5" />
        <Group names={["sheet"]} />
        <Grip className="ml-[14px] mr-[6px]" />
        <Group className="w-[174px]" names={["grail1", "grail2", "grail3", "grail4", "grail5"]} />
      </div>

      <main className="flex min-h-0 flex-1 border-t-[3px] border-[#54585c]">
        <aside className="flex w-[607px] shrink-0 flex-col border-x-2 border-[#5f6163] pl-[6px] pr-[9px] pt-[6px]">
          <TreePanel />
          <FilterPanel />
        </aside>
        <section className="relative min-w-0 flex-1 overflow-hidden bg-[#1f2930]">
          <Trailer />
          <NewLevelDialog />
        </section>
      </main>

      <svg className="pointer-events-none absolute left-0 top-0" width="1817" height="1003" viewBox="0 0 1817 1003" fill="none" stroke="#fade1a" strokeLinecap="round" aria-hidden="true">
        <path d="M600 246L450 307" strokeWidth="9" />
        <path d="M461 287L439 312L472 314" strokeWidth="5" strokeLinejoin="round" />
        <path d="M440 312l24-18 8 14z" fill="#fade1a" strokeWidth="2" />
        <path d="M1562 621L1470 690" strokeWidth="10" />
        <path d="M1475 667L1460 697L1494 691" strokeWidth="5" strokeLinejoin="round" />
        <path d="M1460 697l14-20 10 12z" fill="#fade1a" strokeWidth="2" />
      </svg>
      <p className="absolute left-[573px] top-[102px] flex h-[147px] w-[391px] items-center justify-center rounded-[4px] bg-[#fade1a] px-8 text-center font-['Liberation_Sans',sans-serif] text-[31px] leading-9 text-black">
        1. Click here to create new load level
      </p>
      <p className="absolute left-[1558px] top-[440px] flex h-[189px] w-[232px] items-center justify-center rounded-[4px] bg-[#fade1a] px-3 text-center font-['Liberation_Sans',sans-serif] text-[31px] leading-9 text-black">
        1. Enter load level information; and other load levels
      </p>
    </div>
  );
}
